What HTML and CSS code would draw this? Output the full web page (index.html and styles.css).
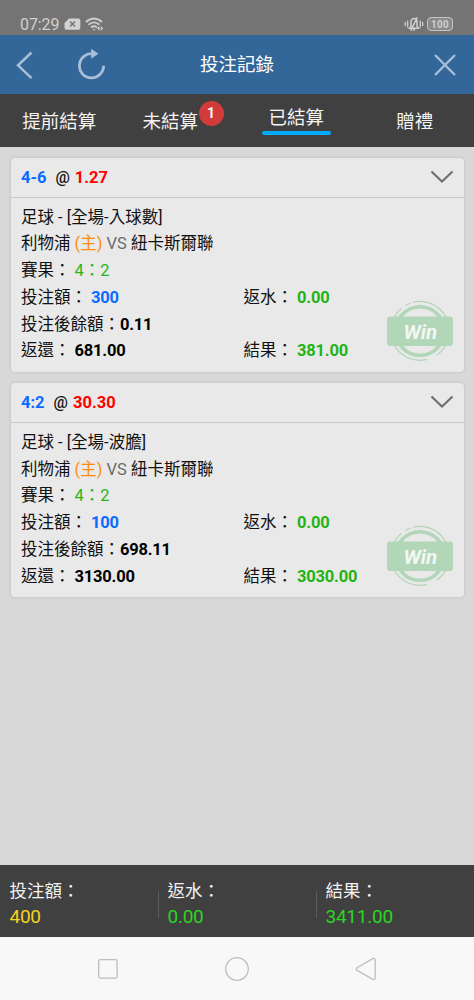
FILE: index.html
```html
<!DOCTYPE html>
<html lang="zh-Hant">
<head>
<meta charset="utf-8">
<title>投注記錄</title>
<link rel="stylesheet" href="styles.css">
</head>
<body>
<div class="status">
  <span class="clock">07:29</span>
  <svg class="sim" width="17" height="13" viewBox="0 0 17 13"><path d="M5 .5H14.5Q16.3.5 16.3 2.3V10Q16.3 11.8 14.5 11.8H2.2Q.5 11.8.5 10V5Z" fill="#d2d2d2"/><path d="M6 3.5l5 5M11 3.5l-5 5" stroke="#707070" stroke-width="1.4"/></svg>
  <svg class="wifi" width="20" height="15" viewBox="0 0 20 15" fill="none" stroke="#cfcfcf" stroke-width="1.8"><path d="M1 5Q9 -2 17 5M3.5 7.8Q9 3 14.5 7.8M6 10.5Q9 8 12 10.5"/><path d="M7.4 12.2h3.2L9 13.8z" fill="#cfcfcf" stroke="none"/><path d="M14.6 9l-2.6 2.4l2.6 2.4zM15.8 9l2.6 2.4l-2.6 2.4z" fill="#cfcfcf" stroke="none"/></svg>
  <span class="spacer"></span>
  <svg class="mute" width="20" height="16" viewBox="0 0 20 16" fill="none" stroke="#cfcfcf" stroke-width="1.3"><path d="M1.3 6v4M3.7 4.5v7M16.3 4.5v7M18.7 6v4"/><path d="M5.5 12.2L7 10.5V6Q7 2.6 10 2.6T13 6V10.5L14.5 12.2ZM9 13.8h2M13.2 1.2L6.8 14.6" stroke-width="1.5"/></svg>
  <span class="battery">100</span>
</div>
<header class="bar">
  <svg class="back" width="18" height="29" viewBox="0 0 18 29"><path d="M15.5 1.5L2 14.3L15.5 27.2" fill="none" stroke="#a9bfd8" stroke-width="2.5"/></svg>
  <svg class="reload" width="28" height="32" viewBox="0 0 28 32"><path d="M25.6 17.8A12.1 12.1 0 1 1 15 5.8" fill="none" stroke="#a9bfd8" stroke-width="2.8"/><path d="M13.2 .8L20.4 5.8L13.2 10.8Z" fill="#a9bfd8"/></svg>
  <h1>投注記錄</h1>
  <svg class="close" width="24" height="24" viewBox="0 0 24 24"><path d="M2 2L22 22M22 2L2 22" stroke="#a9bfd8" stroke-width="2.4"/></svg>
</header>
<nav class="tabs">
  <span class="tab">提前結算</span>
  <span class="tab">未結算<b class="badge">1</b></span>
  <span class="tab"><span class="active">已結算</span></span>
  <span class="tab">贈禮</span>
</nav>
<main>
  <section class="card">
    <div class="head"><b class="pick">4-6</b><span class="at">@</span><b class="odds">1.27</b><svg class="chev" width="24" height="14" viewBox="0 0 24 14"><path d="M1.5 1.5L12 11.6L22.5 1.5" fill="none" stroke="#6e6e6e" stroke-width="2.1"/></svg></div>
    <div class="body">
      <div class="row">足球 - [全場-入球數]</div>
      <div class="row">利物浦 <i class="home">(主)</i> <i class="vs">VS</i> 紐卡斯爾聯</div>
      <div class="row">賽果： <i class="score">4：2</i></div>
      <div class="row split"><span>投注額： <b class="blue">300</b></span><span>返水： <b class="green">0.00</b></span></div>
      <div class="row">投注後餘額：<b>0.11</b></div>
      <div class="row split"><span>返還： <b>681.00</b></span><span>結果： <b class="green">381.00</b></span></div>
    </div>
    <svg class="stamp" width="68" height="62" viewBox="0 0 68 62">
      <g fill="none" stroke="#b1d6b8">
        <circle cx="34" cy="31" r="24.3" stroke-width="3.6"/>
        <path d="M27 2.2A29.3 29.3 0 0 1 61.6 21M19.5 5.4L24.5 3M7.4 18.5A29.3 29.3 0 0 1 15.5 8.3M7.4 43.5A29.3 29.3 0 0 0 41 59.4M51 54.9A29.3 29.3 0 0 0 60.8 43" stroke-width="1.2"/>
      </g>
      <rect x="1" y="16.5" width="66" height="29.5" rx="3" fill="#b1d6b8"/>
      <text x="34.3" y="38.8" text-anchor="middle" class="win-text">Win</text>
    </svg>
  </section>
  <section class="card">
    <div class="head"><b class="pick">4:2</b><span class="at">@</span><b class="odds">30.30</b><svg class="chev" width="24" height="14" viewBox="0 0 24 14"><path d="M1.5 1.5L12 11.6L22.5 1.5" fill="none" stroke="#6e6e6e" stroke-width="2.1"/></svg></div>
    <div class="body">
      <div class="row">足球 - [全場-波膽]</div>
      <div class="row">利物浦 <i class="home">(主)</i> <i class="vs">VS</i> 紐卡斯爾聯</div>
      <div class="row">賽果： <i class="score">4：2</i></div>
      <div class="row split"><span>投注額： <b class="blue">100</b></span><span>返水： <b class="green">0.00</b></span></div>
      <div class="row">投注後餘額：<b>698.11</b></div>
      <div class="row split"><span>返還： <b>3130.00</b></span><span>結果： <b class="green">3030.00</b></span></div>
    </div>
    <svg class="stamp" width="68" height="62" viewBox="0 0 68 62">
      <g fill="none" stroke="#b1d6b8">
        <circle cx="34" cy="31" r="24.3" stroke-width="3.6"/>
        <path d="M27 2.2A29.3 29.3 0 0 1 61.6 21M19.5 5.4L24.5 3M7.4 18.5A29.3 29.3 0 0 1 15.5 8.3M7.4 43.5A29.3 29.3 0 0 0 41 59.4M51 54.9A29.3 29.3 0 0 0 60.8 43" stroke-width="1.2"/>
      </g>
      <rect x="1" y="16.5" width="66" height="29.5" rx="3" fill="#b1d6b8"/>
      <text x="34.3" y="38.8" text-anchor="middle" class="win-text">Win</text>
    </svg>
  </section>
</main>
<footer class="totals">
  <div class="total"><span>投注額：</span><span class="yellow">400</span></div>
  <div class="total"><span>返水：</span><span class="lime">0.00</span></div>
  <div class="total"><span>結果：</span><span class="lime">3411.00</span></div>
</footer>
<div class="sysnav">
  <svg width="22" height="22" viewBox="0 0 22 22"><rect x="1.7" y="1.7" width="18.4" height="18.4" rx="1.5"/></svg>
  <svg width="26" height="26" viewBox="0 0 26 26"><circle cx="13" cy="13" r="11.3"/></svg>
  <svg width="22" height="24" viewBox="0 0 22 24"><path d="M2 10.8L17.8 1.6Q20 .8 20.2 3V21Q20 23.2 17.8 22.4L2 13.2Q.5 12 2 10.8Z"/></svg>
</div>
</body>
</html>
```
FILE: styles.css
```css
* { box-sizing: border-box; }
body {
  margin: 0;
  width: 474px;
  height: 1000px;
  overflow: hidden;
  display: flex;
  flex-direction: column;
  background: #d8d8d8;
  font-family: Roboto, "Noto Sans CJK TC", sans-serif;
  color: #111;
}
svg { flex: none; display: block; }
i { font-style: normal; }
.status {
  height: 35px;
  flex: none;
  background: #747474;
  display: flex;
  align-items: center;
  padding: 13px 20px 0;
  color: #d0d0d0;
}
.clock { font-size: 16px; width: 44px; line-height: 20px; padding-top: 2px; letter-spacing: -0.1px; }
.wifi { margin-left: 4px; }
.spacer { flex: 1; }
.mute { margin-right: 3px; }
.battery {
  width: 26px;
  height: 14px;
  margin-right: 1px;
  border: 1px solid #c4c4c4;
  border-radius: 4px;
  background: #8a8a8a;
  font-size: 10px;
  font-weight: 700;
  letter-spacing: 0.3px;
  line-height: 13px;
  text-align: center;
}
.bar {
  height: 59px;
  flex: none;
  background: #336699;
  display: grid;
  grid-template-columns: 60px 100px 154px 1fr 42px;
  align-items: center;
}
.back { margin: 1px 0 0 16px; }
.reload { margin: -2px 0 0 18px; }
.bar h1 { margin: 0; padding-top: 1px; font-size: 18.5px; font-weight: 400; color: #fff; text-align: center; line-height: 28px; }
.close { grid-column: 5; margin-left: 1px; }
.tabs {
  height: 53px;
  flex: none;
  background: #404040;
  display: grid;
  grid-template-columns: repeat(4, 1fr);
  color: #f4f4f4;
  font-size: 18.5px;
}
.tab { position: relative; text-align: center; line-height: 28px; padding-top: 14px; }
.tab:nth-child(2) { padding-right: 15px; }
.badge {
  position: absolute;
  left: 80px;
  top: 7px;
  width: 25px;
  height: 25px;
  border-radius: 50%;
  background: #d33b3b;
  font-size: 14px;
  line-height: 25px;
}
.active {
  display: block;
  width: 69px;
  margin: -4px auto 0;
  position: relative;
  height: 31px;
}
.active::after {
  content: "";
  position: absolute;
  left: 0;
  right: 0;
  bottom: 0;
  height: 4px;
  border-radius: 2px;
  background: #00aaff;
}
main { flex: 1; padding: 10.5px 10.5px 0; }
.card {
  position: relative;
  height: 214.5px;
  margin-bottom: 10.8px;
  background: #e9e9e9;
  border-radius: 4px;
  box-shadow: 0 0 3px rgba(0, 0, 0, 0.14);
}
.head {
  height: 40px;
  border-bottom: 1px solid #c8c8c8;
  display: flex;
  align-items: center;
  padding: 0 10px 0 10.5px;
  font-size: 16.5px;
}
.at { margin: 0 5px 0 9px; font-weight: 500; font-size: 16px; }
.pick, .blue { color: #0a6cff; }
.odds { color: #ff0000; }
.chev { margin-left: auto; }
.body { padding: 7px 10.5px 0; font-size: 16.5px; }
.row { height: 26.8px; line-height: 26.8px; white-space: nowrap; }
.row b { color: #000; letter-spacing: -0.22px; }
.row .blue { color: #0a6cff; }
.row .green { color: #1fb414; }
.split { display: grid; grid-template-columns: 222.5px 1fr; }
.home { color: #ff8c0a; }
.vs { color: #6c6c6c; }
.score { color: #27b51b; }
.stamp { position: absolute; left: 375.5px; top: 142.5px; }
.win-text { font: italic 700 20.5px Roboto, sans-serif; fill: #f2f7f2; }
.totals {
  height: 72px;
  flex: none;
  background: #404040;
  display: grid;
  grid-template-columns: 158px 158px 158px;
  padding-top: 13px;
}
.total {
  display: flex;
  flex-direction: column;
  padding-left: 9.5px;
  font-size: 17.5px;
  line-height: 26px;
  color: #f2f2f2;
  background: linear-gradient(#5c5c5c, #5c5c5c) 0 13px / 1px 27px no-repeat;
}
.total:first-child { background: none; }
.total span + span { font-size: 19px; letter-spacing: -0.25px; }
.total .yellow { color: #f5d21c; }
.total .lime { color: #2bd51f; }
.sysnav {
  height: 63px;
  flex: none;
  background: #f8f8f8;
  display: flex;
  align-items: center;
  gap: 105px;
  padding-left: 97px;
  fill: none;
  stroke: #bdbdbd;
  stroke-width: 1.3;
}
```
